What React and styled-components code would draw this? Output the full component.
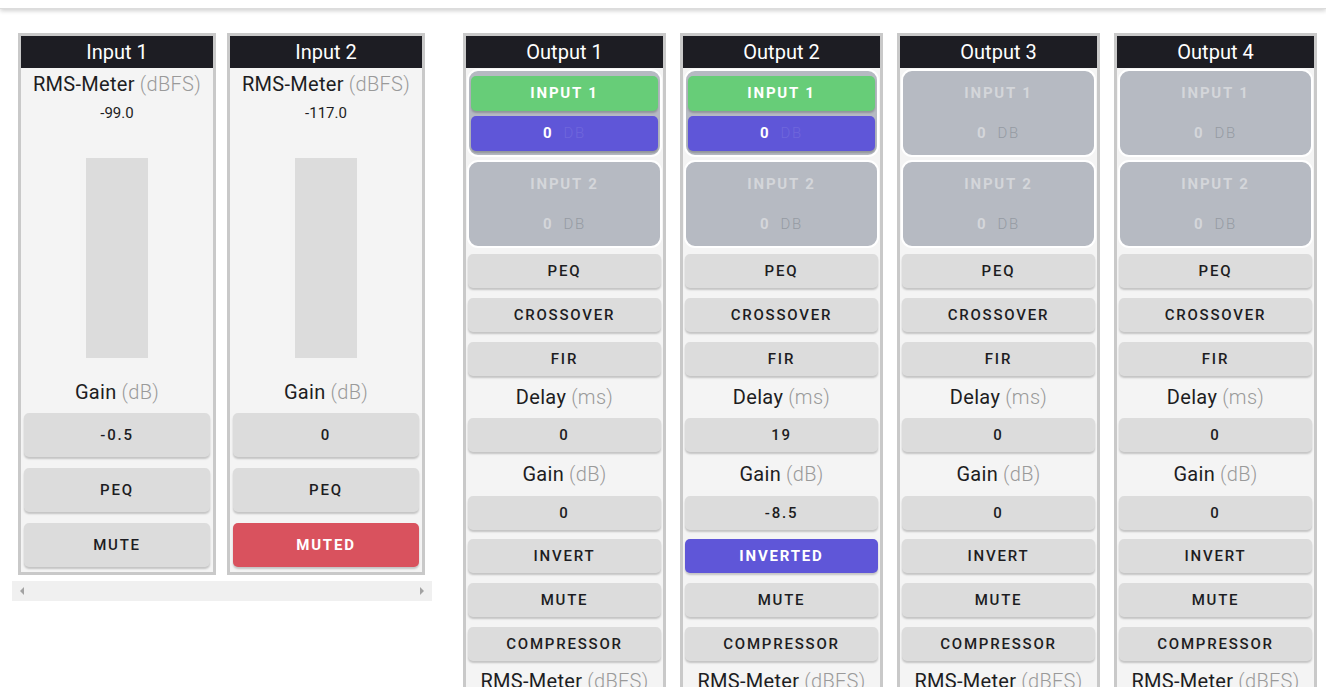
import React from "react";
import styled, { createGlobalStyle } from "styled-components";

const Global = createGlobalStyle`
  html, body {
    margin: 0;
    padding: 0;
    background: #ffffff;
    font-family: "Roboto", "Liberation Sans", sans-serif;
    color: #1d1d22;
    overflow: hidden;
  }
`;

const TopBar = styled.div`
  height: 8px;
  background: #ffffff;
  box-shadow: 0 2px 4px rgba(0, 0, 0, 0.18);
  border-bottom: 1px solid #dcdcdc;
`;

const Main = styled.main`
  display: flex;
  align-items: flex-start;
  padding: 24px 0 0 12px;
  gap: 31px;
`;

const InputsWrap = styled.div`
  width: 420px;
  display: flex;
  flex-direction: column;
  gap: 6px;
`;

const InputsRow = styled.div`
  display: flex;
  gap: 11px;
  padding-left: 6px;
`;

const FakeScroll = styled.div`
  height: 20px;
  background: #f0f0f0;
  display: flex;
  align-items: center;
  justify-content: space-between;
  padding: 0 8px;
  .arrow {
    width: 0;
    height: 0;
    border-top: 4px solid transparent;
    border-bottom: 4px solid transparent;
  }
  .left { border-right: 4px solid #a3a3a3; }
  .right { border-left: 4px solid #a3a3a3; }
`;

const OutputsRow = styled.div`
  display: flex;
  gap: 14px;
`;

const Panel = styled.section`
  width: ${p => p.$w}px;
  box-sizing: border-box;
  background: #f4f4f4;
  border: 3px solid #c9c9c9;
  display: flex;
  flex-direction: column;
  padding-bottom: 5px;
`;

const Head = styled.div`
  height: 32px;
  background: #1d1d23;
  color: #ffffff;
  display: flex;
  align-items: center;
  justify-content: center;
  font-size: 20px;
  font-weight: 400;
`;

const Label = styled.div`
  height: ${p => p.$h || 32}px;
  display: flex;
  align-items: center;
  justify-content: center;
  font-size: 20px;
  letter-spacing: 0.3px;
  color: #1d1d22;
  margin-top: ${p => p.$mt || 0}px;
  span { color: #9a9a9a; margin-left: 5px; font-weight: 300; }
`;

const Value = styled.div`
  text-align: center;
  font-size: 15px;
  line-height: 26px;
`;

const Meter = styled.div`
  width: 62px;
  height: 200px;
  background: #dcdcdc;
  margin: 32px auto 0;
`;

const Btn = styled.button`
  display: flex;
  align-items: center;
  justify-content: center;
  height: ${p => p.$h || 34}px;
  margin: ${p => p.$m || "0 2px"};
  border: none;
  border-radius: 5px;
  font-family: inherit;
  font-size: 15px;
  letter-spacing: 1.8px;
  text-transform: uppercase;
  box-shadow: 0 2px 2px rgba(0, 0, 0, 0.2);
  background: ${p => (p.$tone === "red" ? "#d9525e" : p.$tone === "purple" ? "#5f56d8" : p.$tone === "green" ? "#67cd78" : "#dcdcdc")};
  color: ${p => (p.$tone ? "#ffffff" : "#1d1d22")};
  font-weight: ${p => (p.$tone ? 700 : 500)};
`;

const Stack = styled.div`
  display: flex;
  flex-direction: column;
  gap: ${p => p.$gap}px;
  margin-top: ${p => p.$mt || 0}px;
`;

const Group = styled.div`
  height: 88px;
  box-sizing: border-box;
  margin: ${p => p.$mt}px 1px 0;
  border: 2px solid #ffffff;
  border-radius: 11px;
  background: #b6bac2;
  display: flex;
  flex-direction: column;
  justify-content: center;
  gap: 5px;
  padding: 0 2px;
`;

const GroupLine = styled.div`
  height: 35px;
  display: flex;
  align-items: center;
  justify-content: center;
  font-size: 15px;
  font-weight: 700;
  letter-spacing: 1.8px;
  text-transform: uppercase;
  color: #d4d6da;
  .db { font-weight: 300; color: #959aa3; margin-left: 10px; }
`;

const ActiveLine = styled(GroupLine)`
  border-radius: 5px;
  box-shadow: 0 2px 2px rgba(0, 0, 0, 0.2);
  background: ${p => (p.$tone === "green" ? "#67cd78" : "#5f56d8")};
  color: #ffffff;
  .db { color: #6f67dc; }
`;

const InputPanel = ({ name, level, gain, muted }) => (
  <Panel $w={198}>
    <Head>{name}</Head>
    <Label>RMS-Meter<span>(dBFS)</span></Label>
    <Value>{level}</Value>
    <Meter />
    <Label $h={24} $mt={22}>Gain<span>(dB)</span></Label>
    <Stack $gap={11} $mt={9}>
      <Btn $h={44} $m="0 3px">{gain}</Btn>
      <Btn $h={44} $m="0 3px">PEQ</Btn>
      <Btn $h={44} $m="0 3px" $tone={muted ? "red" : undefined}>{muted ? "MUTED" : "MUTE"}</Btn>
    </Stack>
  </Panel>
);

const RouteGroup = ({ label, active, mt }) =>
  active ? (
    <Group $mt={mt}>
      <ActiveLine $tone="green">{label}</ActiveLine>
      <ActiveLine $tone="purple">0<span className="db">DB</span></ActiveLine>
    </Group>
  ) : (
    <Group $mt={mt}>
      <GroupLine>{label}</GroupLine>
      <GroupLine>0<span className="db">DB</span></GroupLine>
    </Group>
  );

const OutputPanel = ({ name, active, delay, gain, inverted }) => (
  <Panel $w={203}>
    <Head>{name}</Head>
    <RouteGroup label="Input 1" active={active} mt={1} />
    <RouteGroup label="Input 2" mt={3} />
    <Stack $gap={10} $mt={6}>
      <Btn>PEQ</Btn>
      <Btn>CROSSOVER</Btn>
      <Btn>FIR</Btn>
    </Stack>
    <Label $h={42}>Delay<span>(ms)</span></Label>
    <Btn>{delay}</Btn>
    <Label $h={44}>Gain<span>(dB)</span></Label>
    <Btn>{gain}</Btn>
    <Stack $gap={10} $mt={9}>
      <Btn $tone={inverted ? "purple" : undefined}>{inverted ? "INVERTED" : "INVERT"}</Btn>
      <Btn>MUTE</Btn>
      <Btn>COMPRESSOR</Btn>
    </Stack>
    <Label $h={40}>RMS-Meter<span>(dBFS)</span></Label>
    <Value>-99.0</Value>
  </Panel>
);

const outputs = [
  { name: "Output 1", active: true, delay: "0", gain: "0" },
  { name: "Output 2", active: true, delay: "19", gain: "-8.5", inverted: true },
  { name: "Output 3", delay: "0", gain: "0" },
  { name: "Output 4", delay: "0", gain: "0" },
];

export default function App() {
  return (
    <>
      <Global />
      <TopBar />
      <Main>
        <InputsWrap>
          <InputsRow>
            <InputPanel name="Input 1" level="-99.0" gain="-0.5" />
            <InputPanel name="Input 2" level="-117.0" gain="0" muted />
          </InputsRow>
          <FakeScroll>
            <span className="arrow left" />
            <span className="arrow right" />
          </FakeScroll>
        </InputsWrap>
        <OutputsRow>
          {outputs.map(o => (
            <OutputPanel key={o.name} {...o} />
          ))}
        </OutputsRow>
      </Main>
    </>
  );
}
